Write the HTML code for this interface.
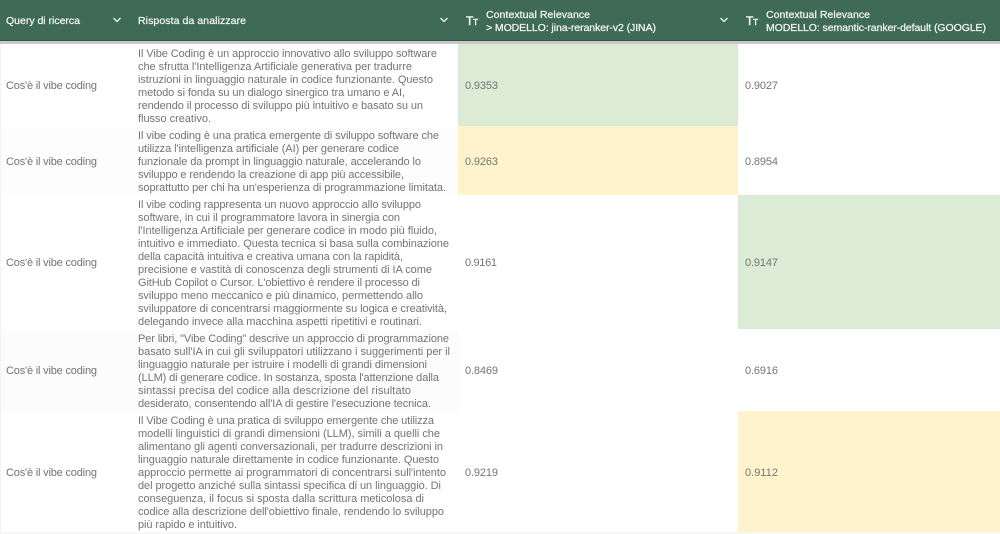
<!DOCTYPE html>
<html lang="it"><head><meta charset="utf-8"><title>Contextual Relevance</title>
<style>
html,body{margin:0;padding:0;width:1000px;height:534px;overflow:hidden;background:#fff}
svg{display:block;font-family:"Liberation Sans",sans-serif;font-size:11px;filter:blur(.3px)}
.b text{fill:#747474}
.h text{fill:#f2f6f4;stroke:#f2f6f4;stroke-width:.25px;font-size:10.5px}
.c{fill:none;stroke:#eef3f0;stroke-width:1.3}
</style></head><body>
<svg width="1000" height="534" viewBox="0 0 1000 534" xmlns="http://www.w3.org/2000/svg" lengthAdjust="spacing">
<rect width="1000" height="534" fill="#fff"/>
<rect y="126" width="458" height="69" fill="#fdfdfd"/>
<rect y="330" width="458" height="81" fill="#fcfcfc"/>
<rect x="0" y="43" width="1" height="491" fill="#f3f3f3"/>
<rect y="532" width="1000" height="2" fill="#f7f7f7"/>
<rect x="458" y="43" width="280" height="83" fill="#dbebd5"/>
<rect x="458" y="126" width="280" height="69" fill="#fef3cd"/>
<rect x="738" y="195" width="262" height="134" fill="#dbebd5"/>
<rect x="738" y="411" width="262" height="121" fill="#fef3cd"/>
<rect width="1000" height="40" fill="#3e6a56"/>
<rect y="40" width="1000" height="1" fill="#2f5544"/>
<rect y="41" width="1000" height="3" fill="#c6c9c7"/>
<g class="h">
<text x="6" y="24" textLength="74">Query di ricerca</text>
<text x="138" y="24" textLength="108">Risposta da analizzare</text>
<text x="486" y="18" textLength="104">Contextual Relevance</text>
<text x="486" y="31" textLength="170">&gt; MODELLO: jina-reranker-v2 (JINA)</text>
<text x="766" y="18" textLength="104">Contextual Relevance</text>
<text x="766" y="31" textLength="220">MODELLO: semantic-ranker-default (GOOGLE)</text>
<text x="466" y="25" style="font-size:12px;stroke-width:.5px">T</text><text x="473" y="25" style="font-size:8.5px;stroke-width:.5px">T</text>
<text x="746" y="25" style="font-size:12px;stroke-width:.5px">T</text><text x="753" y="25" style="font-size:8.5px;stroke-width:.5px">T</text>
</g>
<path class="c" d="M113.5 18l3.5 3.5 3.5-3.5M440.5 18l3.5 3.5 3.5-3.5M720.5 18l3.5 3.5 3.5-3.5"/>
<g class="b">
<text x="6" y="89" textLength="91">Cos'è il vibe coding</text>
<text x="6" y="165" textLength="91">Cos'è il vibe coding</text>
<text x="6" y="266" textLength="91">Cos'è il vibe coding</text>
<text x="6" y="374" textLength="91">Cos'è il vibe coding</text>
<text x="6" y="476" textLength="91">Cos'è il vibe coding</text>

<text x="138" y="57" textLength="299">Il Vibe Coding è un approccio innovativo allo sviluppo software</text>
<text x="138" y="70" textLength="274">che sfrutta l'Intelligenza Artificiale generativa per tradurre</text>
<text x="138" y="83" textLength="295">istruzioni in linguaggio naturale in codice funzionante. Questo</text>
<text x="138" y="96" textLength="267">metodo si fonda su un dialogo sinergico tra umano e AI,</text>
<text x="138" y="109" textLength="285">rendendo il processo di sviluppo più intuitivo e basato su un</text>
<text x="138" y="122" textLength="73">flusso creativo.</text>

<text x="138" y="139" textLength="301">Il vibe coding è una pratica emergente di sviluppo software che</text>
<text x="138" y="152" textLength="261">utilizza l'intelligenza artificiale (AI) per generare codice</text>
<text x="138" y="165" textLength="283">funzionale da prompt in linguaggio naturale, accelerando lo</text>
<text x="138" y="178" textLength="266">sviluppo e rendendo la creazione di app più accessibile,</text>
<text x="138" y="191" textLength="308">soprattutto per chi ha un'esperienza di programmazione limitata.</text>

<text x="138" y="208" textLength="283">Il vibe coding rappresenta un nuovo approccio allo sviluppo</text>
<text x="138" y="221" textLength="262">software, in cui il programmatore lavora in sinergia con</text>
<text x="138" y="234" textLength="299">l'Intelligenza Artificiale per generare codice in modo più fluido,</text>
<text x="138" y="247" textLength="311">intuitivo e immediato. Questa tecnica si basa sulla combinazione</text>
<text x="138" y="260" textLength="265">della capacità intuitiva e creativa umana con la rapidità,</text>
<text x="138" y="273" textLength="294">precisione e vastità di conoscenza degli strumenti di IA come</text>
<text x="138" y="286" textLength="282">GitHub Copilot o Cursor. L'obiettivo è rendere il processo di</text>
<text x="138" y="299" textLength="285">sviluppo meno meccanico e più dinamico, permettendo allo</text>
<text x="138" y="312" textLength="309">sviluppatore di concentrarsi maggiormente su logica e creatività,</text>
<text x="138" y="325" textLength="284">delegando invece alla macchina aspetti ripetitivi e routinari.</text>

<text x="138" y="342" textLength="311">Per libri, "Vibe Coding" descrive un approccio di programmazione</text>
<text x="138" y="355" textLength="312">basato sull'IA in cui gli sviluppatori utilizzano i suggerimenti per il</text>
<text x="138" y="368" textLength="289">linguaggio naturale per istruire i modelli di grandi dimensioni</text>
<text x="138" y="381" textLength="301">(LLM) di generare codice. In sostanza, sposta l'attenzione dalla</text>
<text x="138" y="394" textLength="273">sintassi precisa del codice alla descrizione del risultato</text>
<text x="138" y="407" textLength="293">desiderato, consentendo all'IA di gestire l'esecuzione tecnica.</text>

<text x="138" y="424" textLength="296">Il Vibe Coding è una pratica di sviluppo emergente che utilizza</text>
<text x="138" y="437" textLength="302">modelli linguistici di grandi dimensioni (LLM), simili a quelli che</text>
<text x="138" y="450" textLength="305">alimentano gli agenti conversazionali, per tradurre descrizioni in</text>
<text x="138" y="463" textLength="301">linguaggio naturale direttamente in codice funzionante. Questo</text>
<text x="138" y="476" textLength="308">approccio permette ai programmatori di concentrarsi sull'intento</text>
<text x="138" y="489" textLength="303">del progetto anziché sulla sintassi specifica di un linguaggio. Di</text>
<text x="138" y="502" textLength="286">conseguenza, il focus si sposta dalla scrittura meticolosa di</text>
<text x="138" y="515" textLength="306">codice alla descrizione dell'obiettivo finale, rendendo lo sviluppo</text>
<text x="138" y="528" textLength="99">più rapido e intuitivo.</text>

<text x="465" y="89" textLength="33">0.9353</text>
<text x="465" y="165" textLength="33">0.9263</text>
<text x="465" y="266" textLength="32">0.9161</text>
<text x="465" y="374" textLength="33">0.8469</text>
<text x="465" y="476" textLength="33">0.9219</text>
<text x="745" y="89" textLength="33">0.9027</text>
<text x="745" y="165" textLength="33">0.8954</text>
<text x="745" y="266" textLength="33">0.9147</text>
<text x="745" y="374" textLength="33">0.6916</text>
<text x="745" y="476" textLength="33">0.9112</text>
</g>
</svg>
</body></html>
